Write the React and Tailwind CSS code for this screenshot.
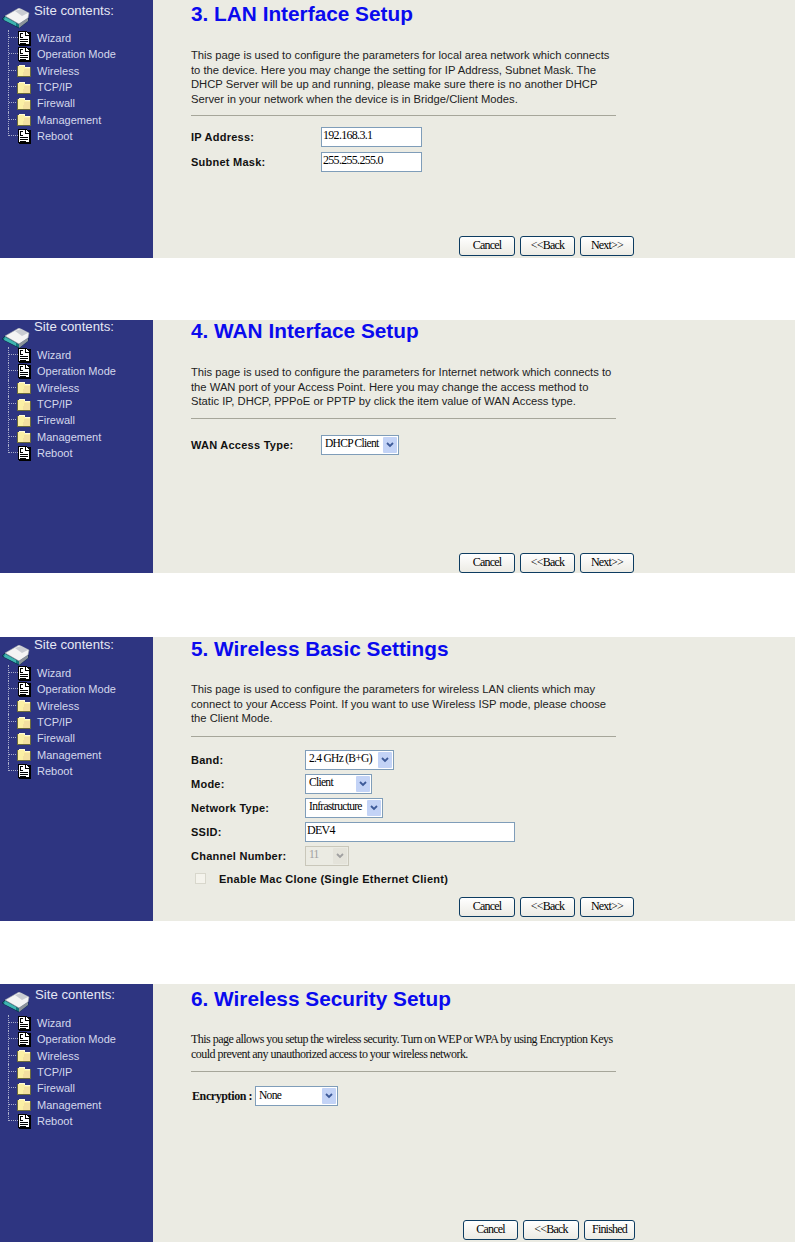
import React from 'react';

const navItems = [
  { title: 'Wizard', icon: 'doc' },
  { title: 'Operation Mode', icon: 'doc' },
  { title: 'Wireless', icon: 'folder' },
  { title: 'TCP/IP', icon: 'folder' },
  { title: 'Firewall', icon: 'folder' },
  { title: 'Management', icon: 'folder' },
  { title: 'Reboot', icon: 'doc' },
];

const DocIcon = () => (
  <svg width="14" height="15" viewBox="0 0 14 15" shapeRendering="crispEdges" className="shrink-0">
    <rect x="2" y="1" width="12" height="14" fill="#000" />
    <path d="M1 0h8l3 3v10H1z" fill="#fff" stroke="#000" strokeWidth="1" />
    <path d="M8 0v4h4" fill="none" stroke="#000" />
    <path d="M3 2h3v1H4v3h2v1H3z" fill="#000" />
    <path d="M3 8h8M3 10h8M3 12h6" stroke="#000" strokeWidth="1" />
  </svg>
);

const FolderIcon = () => (
  <svg width="14" height="13" viewBox="0 0 14 13" shapeRendering="crispEdges" className="shrink-0">
    <path d="M2 1h5l1 2h5v9H1V2z" fill="#fbf0a4" />
    <path d="M7 5h6v7H6z" fill="#f3e0a0" />
    <path d="M2 1h5l1 2h5" fill="none" stroke="#fffbd6" />
    <path d="M0.5 2v10.5h13V3" fill="none" stroke="#6b6a3a" />
    <path d="M1 13h13" stroke="#000" />
  </svg>
);

const Logo = () => (
  <svg width="29" height="21" viewBox="0 0 29 21" className="shrink-0">
    <path d="M1 11 L18 20 L27 13 L27 10 L18 16 L4 8z" fill="#14767c" stroke="#0b2f4a" strokeWidth="0.8" />
    <path d="M3 12 L15 18 L15 15 L4 9z" fill="#3fb4b0" />
    <path d="M4 8 L18 0 L28 5 L27 10 L18 16z" fill="#f4f4f4" stroke="#9aa0a8" strokeWidth="0.6" />
    <path d="M14 3 L20 1 L27 5 L21 8z" fill="#c9ccd2" />
    <path d="M18 16 L27 10 L27 13 L18 20z" fill="#8d939b" />
  </svg>
);

// tree sidebar, same for every panel
const Sidebar = ({ head, gap }) => (
  <div className="w-[153px] shrink-0 bg-[#2e3581]">
    <div className={`flex items-start ${gap}`}>
      <div className="ml-[1px] mt-[8px] w-[33px]">
        <Logo />
      </div>
      <span className={`${head} whitespace-nowrap font-['Liberation_Sans',sans-serif] text-[13.2px] leading-[16px] text-[#e6e8f4]`}>
        Site contents:
      </span>
    </div>
    <div className="ml-[8px]">
      {navItems.map((item, i) => (
        <div key={item.title} className="flex h-[16.33px] items-center">
          <div className={`w-[10px] self-start border-l border-dotted border-[#a9adc9] ${i === navItems.length - 1 ? 'h-[8px]' : 'h-[16.33px]'}`}>
            <div className="h-[8px] border-b border-dotted border-[#a9adc9]" />
          </div>
          <div className="-ml-px flex w-[20px] justify-start">
            {item.icon === 'doc' ? <DocIcon /> : <FolderIcon />}
          </div>
          <span className="whitespace-nowrap font-['Liberation_Sans',sans-serif] text-[11px] leading-[16px] text-[#d5d8ec]">
            {item.title}
          </span>
        </div>
      ))}
    </div>
  </div>
);

const Button = ({ width, children }) => (
  <button className={`${width} flex h-[20px] items-center justify-center rounded-[3px] border border-[#0d3c61] bg-gradient-to-b from-white to-[#ecebe4] pb-[3px] font-['Liberation_Serif',serif] text-[12px] tracking-[-0.8px] text-black`}>
    {children}
  </button>
);

const TextBox = ({ width, value }) => (
  <input
    readOnly
    value={value}
    className={`${width} h-[20px] border border-[#7f9db9] bg-white pb-[3px] pl-[1px] font-['Liberation_Serif',serif] text-[12px] tracking-[-0.7px] text-black`}
  />
);

const SelectBox = ({ width, value, disabled }) => (
  <div className={`${width} flex h-[20px] items-center justify-between border p-[1px] font-['Liberation_Serif',serif] text-[11.5px] tracking-[-0.7px] ${disabled ? 'border-[#c9c7ba] text-[#a0a0a0]' : 'border-[#7f9db9] bg-white text-black'}`}>
    <span className="whitespace-nowrap pb-[2px] pl-[2px]">{value}</span>
    <span className={`flex h-full w-[14px] shrink-0 items-center justify-center rounded-[1px] ${disabled ? 'bg-[#e4e3da]' : 'bg-[#c3d3f6]'}`}>
      <svg width="8" height="6" viewBox="0 0 8 6">
        <path d="M1 1l3 3 3-3" fill="none" stroke={disabled ? '#a0a0a0' : '#3d5a98'} strokeWidth="1.8" />
      </svg>
    </span>
  </div>
);

const Label = ({ width, children }) => (
  <span className={`${width} shrink-0 whitespace-nowrap font-['Liberation_Sans',sans-serif] text-[11px] font-bold leading-[14px] tracking-[0.25px] text-[#111]`}>
    {children}
  </span>
);

const Panel = ({ outer, side, title, titleClass, textClass, text, hrClass, bodyClass, children, buttons, buttonsClass }) => (
  <div className={`flex ${outer}`}>
    <Sidebar {...side} />
    <div className="flex min-w-0 flex-1 flex-col bg-[#ebebe3] pl-[38px]">
      <h2 className={`whitespace-nowrap font-['Liberation_Sans',sans-serif] text-[20.8px] font-bold leading-[23px] text-[#0a0aee] ${titleClass}`}>
        {title}
      </h2>
      <p className={`w-[440px] ${textClass}`}>
        {text.map((line) => (
          <span key={line} className="block whitespace-nowrap">{line}</span>
        ))}
      </p>
      <div className={`h-px w-[425px] bg-[#a6a69a] ${hrClass}`} />
      <div className={bodyClass}>{children}</div>
      <div className={`mt-auto flex ${buttonsClass}`}>{buttons}</div>
    </div>
  </div>
);

const sansText = "font-['Liberation_Sans',sans-serif] text-[11.23px] leading-[14.6px] text-[#222]";

const navButtons = (
  <>
    <Button width="w-[56px]">Cancel</Button>
    <Button width="w-[55px]">&lt;&lt;Back</Button>
    <Button width="w-[54px]">Next&gt;&gt;</Button>
  </>
);

export default function App() {
  return (
    <div className="h-[1242px] w-[795px] overflow-hidden bg-white">
      <Panel
        outer="h-[258px]"
        side={{ head: 'mt-[3px]', gap: 'h-[30px]' }}
        title="3. LAN Interface Setup"
        titleClass="mt-[2px]"
        textClass={`mt-[23px] ${sansText}`}
        text={[
          'This page is used to configure the parameters for local area network which connects',
          'to the device. Here you may change the setting for IP Address, Subnet Mask. The',
          'DHCP Server will be up and running, please make sure there is no another DHCP',
          'Server in your network when the device is in Bridge/Client Modes.',
        ]}
        hrClass="mt-[9px]"
        bodyClass="mt-[11px] flex flex-col gap-[5px]"
        buttons={navButtons}
        buttonsClass="mb-[2px] ml-[268px] gap-[5px]"
      >
        <div className="flex items-center">
          <Label width="w-[130px]">IP Address:</Label>
          <TextBox width="w-[101px]" value="192.168.3.1" />
        </div>
        <div className="flex items-center">
          <Label width="w-[130px]">Subnet Mask:</Label>
          <TextBox width="w-[101px]" value="255.255.255.0" />
        </div>
      </Panel>

      <div className="h-[62px]" />

      <Panel
        outer="h-[253px]"
        side={{ head: '-mt-[1px]', gap: 'h-[27px]' }}
        title="4. WAN Interface Setup"
        titleClass="-mt-[1px]"
        textClass={`mt-[23px] ${sansText}`}
        text={[
          'This page is used to configure the parameters for Internet network which connects to',
          'the WAN port of your Access Point. Here you may change the access method to',
          'Static IP, DHCP, PPPoE or PPTP by click the item value of WAN Access type.',
        ]}
        hrClass="mt-[9px]"
        bodyClass="mt-[16px]"
        buttons={navButtons}
        buttonsClass="ml-[268px] gap-[5px]"
      >
        <div className="flex items-center">
          <Label width="w-[130px]">WAN Access Type:</Label>
          <SelectBox width="w-[78px]" value="DHCP Client" />
        </div>
      </Panel>

      <div className="h-[64px]" />

      <Panel
        outer="h-[284px]"
        side={{ head: '', gap: 'h-[28px]' }}
        title="5. Wireless Basic Settings"
        titleClass="mt-0"
        textClass={`mt-[22px] ${sansText}`}
        text={[
          'This page is used to configure the parameters for wireless LAN clients which may',
          'connect to your Access Point. If you want to use Wireless ISP mode, please choose',
          'the Client Mode.',
        ]}
        hrClass="mt-[10px]"
        bodyClass="mt-[13px] flex flex-col gap-[4px]"
        buttons={navButtons}
        buttonsClass="mb-[4px] ml-[268px] gap-[5px]"
      >
        <div className="flex items-center">
          <Label width="w-[114px]">Band:</Label>
          <SelectBox width="w-[89px]" value="2.4 GHz (B+G)" />
        </div>
        <div className="flex items-center">
          <Label width="w-[114px]">Mode:</Label>
          <SelectBox width="w-[67px]" value="Client" />
        </div>
        <div className="flex items-center">
          <Label width="w-[114px]">Network Type:</Label>
          <SelectBox width="w-[78px]" value="Infrastructure" />
        </div>
        <div className="flex items-center">
          <Label width="w-[114px]">SSID:</Label>
          <TextBox width="w-[210px]" value="DEV4" />
        </div>
        <div className="flex items-center">
          <Label width="w-[114px]">Channel Number:</Label>
          <SelectBox width="w-[44px]" value="11" disabled />
        </div>
        <div className="mt-[2px] flex items-center pl-[4px]">
          <span className="h-[11px] w-[11px] shrink-0 border border-[#d8d7cc] bg-[#f4f3ec]" />
          <span className="ml-[13px] flex">
            <Label width="">Enable Mac Clone (Single Ethernet Client)</Label>
          </span>
        </div>
      </Panel>

      <div className="h-[63px]" />

      <Panel
        outer="h-[258px]"
        side={{ head: 'mt-[3px] ml-[1px]', gap: 'h-[31px]' }}
        title="6. Wireless Security Setup"
        titleClass="mt-[3px]"
        textClass="mt-[22px] font-['Liberation_Serif',serif] text-[12px] leading-[14.6px] tracking-[-0.53px] text-[#111]"
        text={[
          'This page allows you setup the wireless security. Turn on WEP or WPA by using Encryption Keys',
          'could prevent any unauthorized access to your wireless network.',
        ]}
        hrClass="mt-[10px]"
        bodyClass="mt-[14px] pl-[1px]"
        buttons={
          <>
            <Button width="w-[55px]">Cancel</Button>
            <Button width="w-[56px]">&lt;&lt;Back</Button>
            <Button width="w-[51px]">Finished</Button>
          </>
        }
        buttonsClass="mb-[2px] ml-[272px] gap-[5px]"
      >
        <div className="flex items-center">
          <span className="w-[63px] shrink-0 font-['Liberation_Serif',serif] text-[12px] font-bold tracking-[-0.4px] text-[#111]">
            Encryption :
          </span>
          <SelectBox width="w-[83px]" value="None" />
        </div>
      </Panel>
    </div>
  );
}
